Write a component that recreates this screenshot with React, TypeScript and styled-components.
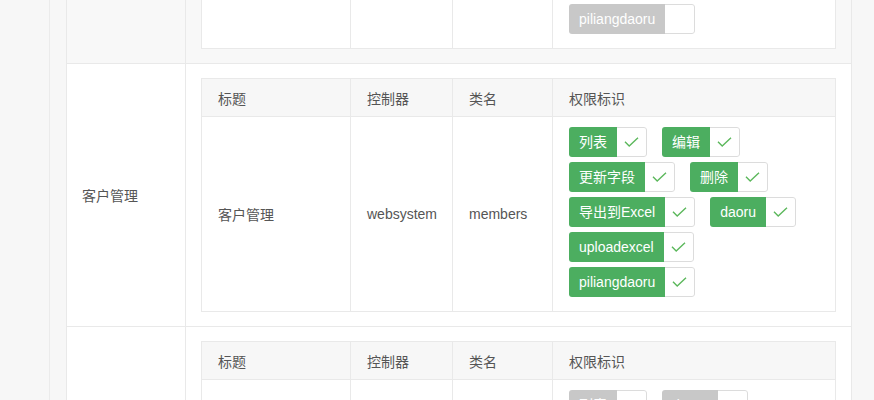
import React, { useLayoutEffect, useRef } from "react";
import styled, { createGlobalStyle } from "styled-components";

const GlobalStyle = createGlobalStyle`
  html, body {
    margin: 0;
    padding: 0;
    background: #f7f7f7;
    font-family: "Liberation Sans", "Noto Sans CJK SC", sans-serif;
    font-size: 14px;
    color: #555;
    overflow: hidden;
  }
`;

const Page = styled.div`
  display: flex;
  height: 400px;
  overflow: hidden;
`;

const Sidebar = styled.div`
  width: 49px;
  flex-shrink: 0;
  background: #f7f7f7;
  border-right: 1px solid #ebebeb;
`;

const Main = styled.div`
  flex: 1;
  height: 400px;
  overflow: hidden;
  padding: 0 22px 0 16px;
`;

const OuterTable = styled.table`
  width: 100%;
  border-collapse: collapse;
  background: #fff;
  border: 1px solid #e9e9e9;
`;

const ModuleRow = styled.tr<{ $striped?: boolean }>`
  background: ${(p) => (p.$striped ? "#f8f8f8" : "#fff")};
  border-bottom: 1px solid #e9e9e9;
`;

const NameCell = styled.td`
  width: 88px;
  padding: 0 15px;
  vertical-align: middle;
  border-right: 1px solid #e9e9e9;
  color: #555;
`;

const DetailCell = styled.td`
  padding: 14px 15px;
`;

const InnerTable = styled.table`
  width: 100%;
  border-collapse: collapse;
  background: #fff;
  border: 1px solid #e9e9e9;
  table-layout: fixed;
`;

const HeadCell = styled.th<{ $w?: number }>`
  width: ${(p) => (p.$w ? `${p.$w}px` : "auto")};
  height: 38px;
  padding: 0 16px;
  background: #f7f7f7;
  border: 1px solid #e9e9e9;
  text-align: left;
  font-weight: normal;
  color: #555;
  box-sizing: border-box;
`;

const BodyCell = styled.td`
  padding: 0 16px;
  border: 1px solid #e9e9e9;
  vertical-align: middle;
  color: #555;
`;

const PermCell = styled.td`
  padding: 10px 16px 9px;
  border: 1px solid #e9e9e9;
  vertical-align: top;
`;

const TagWrap = styled.div`
  display: flex;
  flex-wrap: wrap;
  column-gap: 15px;
`;

const Tag = styled.div`
  display: flex;
  height: 30px;
  margin-bottom: 5px;
  border-radius: 3px;
  overflow: hidden;
`;

const TagLabel = styled.span<{ $on: boolean }>`
  padding: 0 10px;
  line-height: 30px;
  color: #fff;
  background: ${(p) => (p.$on ? "#4cae60" : "#c8c8c8")};
  white-space: nowrap;
`;

const TagCheck = styled.span`
  width: 29px;
  display: flex;
  align-items: center;
  justify-content: center;
  background: #fff;
  border: 1px solid #dcdcdc;
  border-left: none;
  border-radius: 0 3px 3px 0;
`;

const CheckIcon = () => (
  <svg width="15" height="10" viewBox="0 0 15 10" fill="none">
    <path d="M1 4.8 L5.2 9 L14 0.8" stroke="#5cb85c" strokeWidth="1.4" />
  </svg>
);

type Module = {
  name: string;
  title: string;
  controller: string;
  className: string;
  perms: string[];
  on: boolean;
  striped?: boolean;
};

const fullPerms = [
  "列表",
  "编辑",
  "更新字段",
  "删除",
  "导出到Excel",
  "daoru",
  "uploadexcel",
  "piliangdaoru",
];

const modules: Module[] = [
  {
    name: "会员管理",
    title: "会员管理",
    controller: "websystem",
    className: "users",
    perms: fullPerms,
    on: false,
    striped: true,
  },
  {
    name: "客户管理",
    title: "客户管理",
    controller: "websystem",
    className: "members",
    perms: fullPerms,
    on: true,
  },
  {
    name: "订单管理",
    title: "订单管理",
    controller: "websystem",
    className: "orders",
    perms: ["列表", "daoru", "更新字段", "删除"],
    on: false,
  },
];

const App = () => {
  const mainRef = useRef<HTMLDivElement>(null);

  useLayoutEffect(() => {
    // page is shown scrolled down to the 客户管理 block
    if (mainRef.current) mainRef.current.scrollTop = 200;
  }, []);

  return (
    <>
      <GlobalStyle />
      <Page>
        <Sidebar />
        <Main ref={mainRef}>
          <OuterTable>
            <tbody>
              {modules.map((m) => (
                <ModuleRow key={m.name} $striped={m.striped}>
                  <NameCell>{m.name}</NameCell>
                  <DetailCell>
                    <InnerTable>
                      <thead>
                        <tr>
                          <HeadCell $w={149}>标题</HeadCell>
                          <HeadCell $w={102}>控制器</HeadCell>
                          <HeadCell $w={100}>类名</HeadCell>
                          <HeadCell>权限标识</HeadCell>
                        </tr>
                      </thead>
                      <tbody>
                        <tr>
                          <BodyCell>{m.title}</BodyCell>
                          <BodyCell>{m.controller}</BodyCell>
                          <BodyCell>{m.className}</BodyCell>
                          <PermCell>
                            <TagWrap>
                              {m.perms.map((p) => (
                                <Tag key={p}>
                                  <TagLabel $on={m.on}>{p}</TagLabel>
                                  <TagCheck>{m.on && <CheckIcon />}</TagCheck>
                                </Tag>
                              ))}
                            </TagWrap>
                          </PermCell>
                        </tr>
                      </tbody>
                    </InnerTable>
                  </DetailCell>
                </ModuleRow>
              ))}
            </tbody>
          </OuterTable>
        </Main>
      </Page>
    </>
  );
};

export default App;
